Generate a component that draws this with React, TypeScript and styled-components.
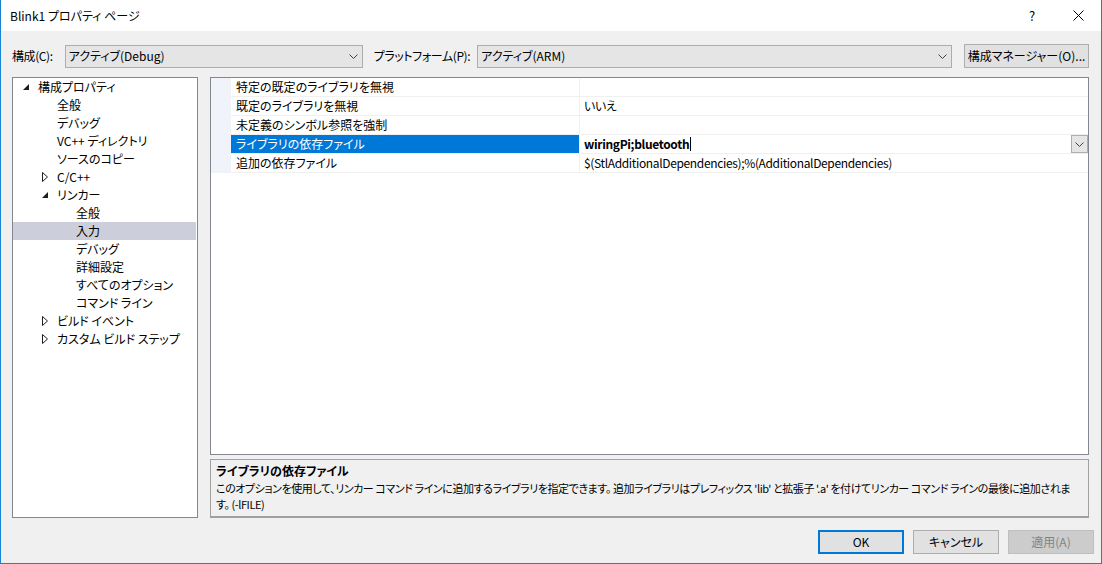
import * as React from 'react'
import styled, {createGlobalStyle} from 'styled-components'

const FONT = '"Noto Sans CJK JP", "Noto Sans", sans-serif'

const GlobalStyle = createGlobalStyle`
  html, body {
    margin: 0;
    padding: 0;
    background: #ffffff;
  }
  body {
    font-family: ${FONT};
    font-size: 12px;
    color: #000000;
    font-feature-settings: "palt";
  }
`

const Window = styled.div`
  width: 1102px;
  height: 564px;
  box-sizing: border-box;
  border: 1px solid #1883d7;
  border-top: none;
  background: #f0f0f0;
  display: flex;
  flex-direction: column;
  overflow: hidden;
`

const TitleBar = styled.div`
  height: 31px;
  flex: none;
  background: #ffffff;
  display: flex;
  align-items: center;
  padding-left: 9px;
`

const Title = styled.div`
  flex: 1;
  line-height: 16px;
`

const CaptionButton = styled.div`
  width: 46px;
  height: 31px;
  display: flex;
  align-items: center;
  justify-content: center;
  font-size: 13px;
`

const Content = styled.div`
  padding: 13px 12px 0 11px;
  display: flex;
  flex-direction: column;
`

const Toolbar = styled.div`
  display: flex;
  align-items: center;
  height: 24px;
`

const Label = styled.div<{$mr: number; $ml?: number}>`
  margin-left: ${p => p.$ml ?? 0}px;
  margin-right: ${p => p.$mr}px;
  flex: none;
  line-height: 16px;
  white-space: nowrap;
  letter-spacing: -0.4px;
`

const Combo = styled.div<{$w?: number}>`
  ${p => (p.$w ? `width: ${p.$w}px; flex: none;` : 'flex: 1; min-width: 0;')}
  height: 23px;
  box-sizing: border-box;
  border: 1px solid #adadad;
  background: #e5e5e5;
  display: flex;
  align-items: center;
  padding: 0 4px 0 3px;
`

const ComboText = styled.div`
  flex: 1;
  line-height: 16px;
`

const Button = styled.div<{$w: number; $primary?: boolean; $disabled?: boolean}>`
  width: ${p => p.$w}px;
  height: 24px;
  box-sizing: border-box;
  border: ${p => (p.$primary ? '2px solid #0078d7' : p.$disabled ? '1px solid #bfbfbf' : '1px solid #adadad')};
  background: ${p => (p.$disabled ? '#cccccc' : '#e1e1e1')};
  color: ${p => (p.$disabled ? '#838383' : '#000000')};
  display: flex;
  align-items: center;
  justify-content: center;
  flex: none;
  line-height: 16px;
  white-space: nowrap;
`

const ManagerButton = styled(Button)`
  margin-left: 12px;
`

const Main = styled.div`
  margin-top: 9px;
  height: 441px;
  display: flex;
  gap: 12px;
`

const Tree = styled.div`
  width: 186px;
  flex: none;
  box-sizing: border-box;
  border: 1px solid #828790;
  background: #ffffff;
`

const TreeRow = styled.div<{$level: number; $selected?: boolean}>`
  height: 18px;
  display: flex;
  align-items: center;
  padding-left: ${p => 10 + p.$level * 19}px;
  margin-right: 1px;
  background: ${p => (p.$selected ? '#cccedb' : 'transparent')};
`

const Toggle = styled.div`
  width: 15px;
  height: 18px;
  flex: none;
  display: flex;
  align-items: center;
`

const TreeText = styled.div`
  line-height: 16px;
  white-space: nowrap;
`

const RightColumn = styled.div`
  flex: 1;
  min-width: 0;
  display: flex;
  flex-direction: column;
  gap: 4px;
`

const Grid = styled.div`
  height: 378px;
  box-sizing: border-box;
  border: 1px solid #828790;
  background: #ffffff;
`

const GridRow = styled.div`
  display: grid;
  grid-template-columns: 20px 349px minmax(0, 1fr);
  height: 19px;
`

const Gutter = styled.div`
  background: #f0f4fa;
`

const NameCell = styled.div<{$selected?: boolean}>`
  box-sizing: border-box;
  border-bottom: 1px solid #f0f0f0;
  border-right: 1px solid #f0f0f0;
  padding-left: 5px;
  display: flex;
  align-items: center;
  background: ${p => (p.$selected ? '#0078d7' : '#ffffff')};
  color: ${p => (p.$selected ? '#ffffff' : '#000000')};
  line-height: 16px;
  white-space: nowrap;
`

const ValueCell = styled.div<{$bold?: boolean}>`
  box-sizing: border-box;
  border-bottom: 1px solid #f0f0f0;
  padding-left: 4px;
  display: flex;
  align-items: center;
  font-weight: ${p => (p.$bold ? 700 : 400)};
  letter-spacing: -0.35px;
  line-height: 16px;
  white-space: nowrap;
`

const Caret = styled.span`
  width: 1px;
  height: 14px;
  background: #000000;
  margin-left: 1px;
`

const DropButton = styled.div`
  margin-left: auto;
  width: 17px;
  height: 18px;
  box-sizing: border-box;
  border: 1px solid #adadad;
  background: #e5e5e5;
  display: flex;
  align-items: center;
  justify-content: center;
  align-self: flex-start;
`

const Description = styled.div`
  height: 59px;
  box-sizing: border-box;
  border: 1px solid #a0a0a0;
  border-bottom-width: 2px;
  background: #f0f0f0;
  padding: 2px 5px 0 5px;
  overflow: hidden;
`

const DescTitle = styled.div`
  font-weight: 700;
  line-height: 18px;
`

const DescLine = styled.div`
  font-size: 11px;
  letter-spacing: -0.42px;
  line-height: 16px;
  white-space: nowrap;
`

const Footer = styled.div`
  margin-top: 12px;
  padding-right: 7px;
  display: flex;
  justify-content: flex-end;
  gap: 9px;
`

const Chevron = () => (
  <svg width="9" height="5" viewBox="0 0 9 5">
    <polyline points="0.5,0.5 4.5,4.5 8.5,0.5" fill="none" stroke="#404040" strokeWidth="1" />
  </svg>
)

const Expanded = () => (
  <svg width="6" height="6" viewBox="0 0 6 6">
    <polygon points="6,0 6,6 0,6" fill="#1e1e1e" />
  </svg>
)

const Collapsed = () => (
  <svg width="6" height="10" viewBox="0 0 6 10">
    <polygon points="0.5,0.5 5.5,5 0.5,9.5" fill="none" stroke="#1e1e1e" strokeWidth="1" />
  </svg>
)

const CloseIcon = () => (
  <svg width="11" height="11" viewBox="0 0 11 11">
    <path d="M0.5 0.5 L10.5 10.5 M10.5 0.5 L0.5 10.5" stroke="#000" strokeWidth="1" />
  </svg>
)

type Node = {label: string; level: number; toggle?: 'open' | 'closed'; selected?: boolean}

const tree: Node[] = [
  {label: '構成プロパティ', level: 0, toggle: 'open'},
  {label: '全般', level: 1},
  {label: 'デバッグ', level: 1},
  {label: 'VC++ ディレクトリ', level: 1},
  {label: 'ソースのコピー', level: 1},
  {label: 'C/C++', level: 1, toggle: 'closed'},
  {label: 'リンカー', level: 1, toggle: 'open'},
  {label: '全般', level: 2},
  {label: '入力', level: 2, selected: true},
  {label: 'デバッグ', level: 2},
  {label: '詳細設定', level: 2},
  {label: 'すべてのオプション', level: 2},
  {label: 'コマンド ライン', level: 2},
  {label: 'ビルド イベント', level: 1, toggle: 'closed'},
  {label: 'カスタム ビルド ステップ', level: 1, toggle: 'closed'},
]

type Prop = {name: string; value: string; selected?: boolean}

const props: Prop[] = [
  {name: '特定の既定のライブラリを無視', value: ''},
  {name: '既定のライブラリを無視', value: 'いいえ'},
  {name: '未定義のシンボル参照を強制', value: ''},
  {name: 'ライブラリの依存ファイル', value: 'wiringPi;bluetooth', selected: true},
  {name: '追加の依存ファイル', value: '$(StlAdditionalDependencies);%(AdditionalDependencies)'},
]

export default function App() {
  return (
    <>
      <GlobalStyle />
      <Window>
        <TitleBar>
          <Title>Blink1 プロパティ ページ</Title>
          <CaptionButton>?</CaptionButton>
          <CaptionButton>
            <CloseIcon />
          </CaptionButton>
        </TitleBar>
        <Content>
          <Toolbar>
            <Label $mr={12}>構成(C):</Label>
            <Combo $w={298}>
              <ComboText>アクティブ(Debug)</ComboText>
              <Chevron />
            </Combo>
            <Label $ml={11} $mr={7}>
              プラットフォーム(P):
            </Label>
            <Combo>
              <ComboText>アクティブ(ARM)</ComboText>
              <Chevron />
            </Combo>
            <ManagerButton $w={125}>構成マネージャー(O)...</ManagerButton>
          </Toolbar>
          <Main>
            <Tree>
              {tree.map((n, i) => (
                <TreeRow key={i} $level={n.level} $selected={n.selected}>
                  <Toggle>
                    {n.toggle === 'open' && <Expanded />}
                    {n.toggle === 'closed' && <Collapsed />}
                  </Toggle>
                  <TreeText>{n.label}</TreeText>
                </TreeRow>
              ))}
            </Tree>
            <RightColumn>
              <Grid>
                {props.map((p, i) => (
                  <GridRow key={i}>
                    <Gutter />
                    <NameCell $selected={p.selected}>{p.name}</NameCell>
                    <ValueCell $bold={p.selected}>
                      {p.value}
                      {p.selected && <Caret />}
                      {p.selected && (
                        <DropButton>
                          <Chevron />
                        </DropButton>
                      )}
                    </ValueCell>
                  </GridRow>
                ))}
              </Grid>
              <Description>
                <DescTitle>ライブラリの依存ファイル</DescTitle>
                <DescLine>
                  このオプションを使用して、リンカー コマンド ラインに追加するライブラリを指定できます。 追加ライブラリはプレフィックス 'lib' と拡張子 '.a' を付けてリンカー コマンド ラインの最後に追加されま
                </DescLine>
                <DescLine>す。 (-lFILE)</DescLine>
              </Description>
            </RightColumn>
          </Main>
        </Content>
        <Footer>
          <Button $w={86} $primary>
            OK
          </Button>
          <Button $w={86}>キャンセル</Button>
          <Button $w={86} $disabled>
            適用(A)
          </Button>
        </Footer>
      </Window>
    </>
  )
}
